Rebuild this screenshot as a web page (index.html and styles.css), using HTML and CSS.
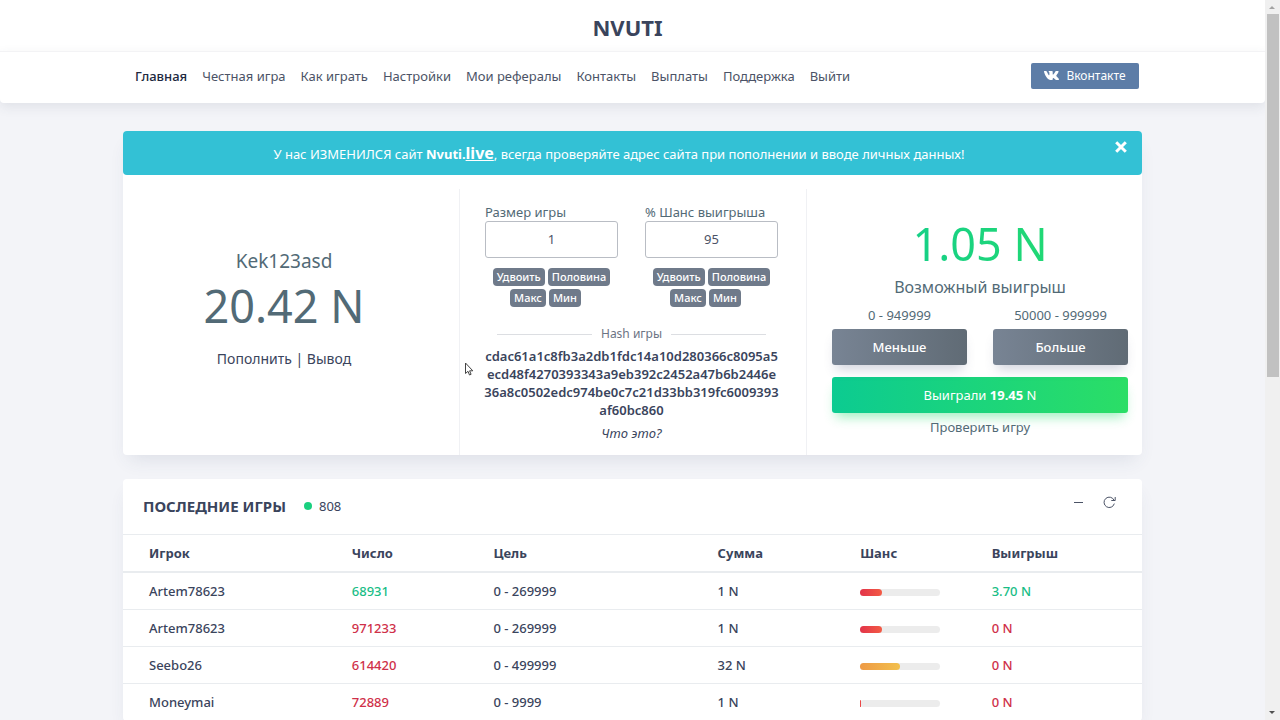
FILE: index.html
```html
<!DOCTYPE html>
<html lang="ru">
<head>
  <meta charset="UTF-8">
  <title>NVUTI</title>
  <link rel="stylesheet" href="styles.css">
</head>
<body>

  <div class="page">
    <!-- Header -->
    <header class="header">
      <div class="brand"><a href="#">NVUTI</a></div>
      <nav class="navbar">
        <div class="nav-inner">
          <div class="nav-links">
            <a href="#" class="active">Главная</a>
            <a href="#">Честная игра</a>
            <a href="#">Как играть</a>
            <a href="#">Настройки</a>
            <a href="#">Мои рефералы</a>
            <a href="#">Контакты</a>
            <a href="#">Выплаты</a>
            <a href="#">Поддержка</a>
            <a href="#">Выйти</a>
          </div>
          <a href="#" class="btn-vk">
            <svg width="15" height="9" viewBox="0 0 15 9" fill="#fff">
              <path d="M7.2 9h1c.4 0 .5-.3.5-.8 0-1.200.4-1.500 1.200-.9.800.6 1.200 1.700 2.500 1.700H14.500c.7-.2.500-.9.100-1.500-.5-.8-1.300-1.500-2.100-2.300-.3-.3-.3-.6 0-1C13.300 3.200 14.200 1.900 14.600.8c.1-.4-.1-.7-.6-.7h-2c-.4 0-.6.200-.8.600-.5 1.100-1.200 2.200-1.900 2.900-.4.300-.6 0-.6-.5V.8c0-.5-.2-.8-.7-.8H5c-.5 0-.6.300-.3.600.6.6.7 1 .7 1.800v1.400c0 .6-.4.6-.8.100C3.900 2.900 3.300 1.900 2.900.8 2.700.300 2.500.100 2 .100H.5C.1.100-.1.300 0 .800.500 2.800 1.600 5.200 3.100 7 4.300 8.400 5.700 9 7.200 9z"/>
            </svg>
            Вконтакте
          </a>
        </div>
      </nav>
    </header>

    <main class="container">
      <!-- Game -->
      <section class="card game">
        <div class="alert">
          <p>У нас ИЗМЕНИЛСЯ сайт <b>Nvuti.<u>live</u></b>, всегда проверяйте адрес сайта при пополнении и вводе личных данных!</p>
          <button type="button" class="alert-close" aria-label="Закрыть">
            <svg width="12" height="12" viewBox="0 0 12 12" stroke="#fff" stroke-width="3">
              <path d="M1.200 1.200 10.800 10.800M10.800 1.200 1.200 10.800"/>
            </svg>
          </button>
        </div>

        <div class="game-body">
          <div class="col account">
            <div class="username">Kek123asd</div>
            <div class="balance">20.42 N</div>
            <div class="account-links"><a href="#">Пополнить</a> | <a href="#">Вывод</a></div>
          </div>

          <div class="col bet">
            <div class="fields">
              <div class="field">
                <label for="betSize">Размер игры</label>
                <input type="text" id="betSize" value="1">
                <div class="tags">
                  <button type="button">Удвоить</button>
                  <button type="button">Половина</button>
                  <button type="button">Макс</button>
                  <button type="button">Мин</button>
                </div>
              </div>
              <div class="field">
                <label for="betPercent">% Шанс выигрыша</label>
                <input type="text" id="betPercent" value="95">
                <div class="tags">
                  <button type="button">Удвоить</button>
                  <button type="button">Половина</button>
                  <button type="button">Макс</button>
                  <button type="button">Мин</button>
                </div>
              </div>
            </div>
            <div class="divider">Hash игры</div>
            <div class="hash">cdac61a1c8fb3a2db1fdc14a10d280366c8095a5ecd48f4270393343a9eb392c2452a47b6b2446e36a8c0502edc974be0c7c21d33bb319fc6009393af60bc860</div>
            <a href="#" class="what">Что это?</a>
          </div>

          <div class="col play">
            <div class="profit">1.05 N</div>
            <div class="profit-label">Возможный выигрыш</div>
            <div class="choices">
              <div class="choice">
                <span>0 - 949999</span>
                <button type="button" class="btn btn-dark">Меньше</button>
              </div>
              <div class="choice">
                <span>50000 - 999999</span>
                <button type="button" class="btn btn-dark">Больше</button>
              </div>
            </div>
            <button type="button" class="btn btn-win">Выиграли <b>19.45</b> N</button>
            <a href="#" class="check">Проверить игру</a>
          </div>
        </div>
      </section>

      <!-- Last games -->
      <section class="card history">
        <div class="history-head">
          <h4>ПОСЛЕДНИЕ ИГРЫ</h4>
          <span class="dot"></span>
          <span class="online">808</span>
          <div class="tools">
            <button type="button" aria-label="Свернуть">
              <svg width="13" height="13" viewBox="0 0 13 13" fill="none" stroke="#4b5366">
                <path d="M2 6.500h9"/>
              </svg>
            </button>
            <button type="button" aria-label="Обновить">
              <svg width="13" height="13" viewBox="0 0 13 13" fill="none" stroke="#4b5366">
                <path d="M11 4.200A5.200 5.200 0 1 0 11.300 7.600M12.200 1v3.500H8.300"/>
              </svg>
            </button>
          </div>
        </div>
        <table>
          <thead>
            <tr>
              <th class="w-player">Игрок</th>
              <th class="w-number">Число</th>
              <th class="w-target">Цель</th>
              <th class="w-sum">Сумма</th>
              <th class="w-chance">Шанс</th>
              <th>Выигрыш</th>
            </tr>
          </thead>
          <tbody>
            <tr>
              <td>Artem78623</td>
              <td class="win">68931</td>
              <td>0 - 269999</td>
              <td>1 N</td>
              <td><div class="progress"><div class="bar bar-red" style="width: 27%"></div></div></td>
              <td class="win">3.70 N</td>
            </tr>
            <tr>
              <td>Artem78623</td>
              <td class="lose">971233</td>
              <td>0 - 269999</td>
              <td>1 N</td>
              <td><div class="progress"><div class="bar bar-red" style="width: 27%"></div></div></td>
              <td class="lose">0 N</td>
            </tr>
            <tr>
              <td>Seebo26</td>
              <td class="lose">614420</td>
              <td>0 - 499999</td>
              <td>32 N</td>
              <td><div class="progress"><div class="bar bar-orange" style="width: 50%"></div></div></td>
              <td class="lose">0 N</td>
            </tr>
            <tr>
              <td>Moneymai</td>
              <td class="lose">72889</td>
              <td>0 - 9999</td>
              <td>1 N</td>
              <td><div class="progress"><div class="bar bar-red" style="width: 1%"></div></div></td>
              <td class="lose">0 N</td>
            </tr>
          </tbody>
        </table>
      </section>
    </main>
  </div>

  <!-- Scrollbar -->
  <div class="scrollbar">
    <svg width="14" height="14" viewBox="0 0 14 14" fill="#a3a3a3"><path d="M4 9l3-3 3 3z"/></svg>
    <div class="scroll-thumb"></div>
    <svg class="scroll-down" width="14" height="14" viewBox="0 0 14 14" fill="#505050"><path d="M4 5l3 3 3-3z"/></svg>
  </div>

  <!-- Mouse pointer -->
  <svg class="cursor" width="10" height="15" viewBox="0 0 10 15" fill="#fff" stroke="#444" stroke-width="1">
    <path d="M1.500 1v10.500l2.500-2.200 1.500 3.700 1.600-.7-1.500-3.500h3.200z"/>
  </svg>

</body>
</html>
```
FILE: styles.css
```css
* {
  box-sizing: border-box;
}
body {
  margin: 0;
  display: flex;
  height: 100vh;
  overflow: hidden;
  background: #f3f4f8;
  font-family: "Noto Sans", "Open Sans", sans-serif;
  font-size: 13px;
  line-height: 18px;
  color: #3a445c;
}
a {
  color: inherit;
  text-decoration: none;
}
button, input {
  font-family: inherit;
  font-size: 13px;
}
button {
  border: none;
  padding: 0;
  background: none;
  cursor: pointer;
}
.page {
  flex: 1;
  overflow: hidden;
}

/* header */
.brand {
  height: 51px;
  padding: 11px 10px 0 0;
  background: #fff;
  text-align: center;
  font-size: 22px;
  font-weight: bold;
  line-height: 32px;
}
.navbar {
  background: #fff;
  border-top: 1px solid #f3f3f5;
  border-radius: 0 0 4px 4px;
  box-shadow: 0 4px 12px rgba(60,70,90,0.1);
}
.nav-inner {
  max-width: 1019px;
  height: 51px;
  margin: 0 auto;
  padding: 0 3px 4px 12px;
  display: flex;
  align-items: center;
  justify-content: space-between;
}
.nav-links {
  display: flex;
  gap: 15px;
  color: #4b5366;
}
.nav-links .active {
  color: #202840;
  font-weight: 500;
}
.btn-vk {
  display: flex;
  align-items: center;
  justify-content: center;
  gap: 7px;
  width: 108px;
  height: 26px;
  border-radius: 2px;
  background: #5d7da7;
  color: #fff;
  font-size: 12px;
}

/* cards */
.container {
  max-width: 1019px;
  margin: 28px auto 0;
}
.card {
  background: #fff;
  border-radius: 4px;
  box-shadow: 0 10px 18px -6px rgba(60,75,110,0.12);
  margin-bottom: 24px;
}
.alert {
  display: flex;
  align-items: center;
  min-height: 44px;
  padding: 0 15px;
  background: #33c1d5;
  border-radius: 4px;
  color: #fff;
}
.alert p {
  flex: 1;
  margin: 0;
  padding-right: 15px;
  text-align: center;
}
.alert u {
  font-size: 16px;
}
.alert-close {
  align-self: flex-start;
  height: 32px;
}
.alert-close svg {
  display: block;
}

/* game */
.game-body {
  display: grid;
  grid-template-columns: 336fr 347fr 336fr;
  padding-top: 14px;
}
.col {
  min-height: 266px;
  text-align: center;
  color: #526a76;
}
.col + .col {
  border-left: 1px solid #f0f1f4;
}
.account {
  display: flex;
  flex-direction: column;
  justify-content: center;
  padding: 0 14px 28px 0;
}
.username {
  font-size: 19px;
  line-height: 26px;
}
.balance {
  font-size: 45px;
  line-height: 64px;
}
.account-links {
  margin-top: 12px;
  color: #3a445c;
  font-size: 14px;
}
.bet {
  padding: 14px 28px 0 25px;
}
.fields {
  display: grid;
  grid-template-columns: 1fr 1fr;
  gap: 27px;
}
.field label {
  display: block;
  text-align: left;
}
.field input {
  display: block;
  width: 100%;
  height: 37px;
  padding: 0 2px 2px;
  border: 1px solid #b9bdc4;
  border-radius: 3px;
  background: #fff;
  color: #4b5366;
  text-align: center;
}
.tags {
  display: flex;
  flex-wrap: wrap;
  justify-content: center;
  gap: 3px;
  padding-top: 10px;
}
.tags button {
  height: 18px;
  padding: 0 4px 1px;
  border-radius: 4px;
  background: #6f7a8a;
  color: #fff;
  font-size: 11px;
  font-weight: 500;
}
.tags button:last-child {
  margin-right: 12px;
}
.divider {
  display: flex;
  align-items: center;
  gap: 9px;
  margin: 18px 12px 4px;
  font-size: 12px;
  color: #6c7484;
}
.divider::before,
.divider::after {
  content: "";
  flex: 1;
  border-top: 1px solid #dcdee2;
}
.hash {
  margin: 0 -1px;
  color: #3a445c;
  font-weight: 600;
  word-break: break-all;
}
.what {
  display: block;
  margin-top: 5px;
  color: #3a445c;
  font-style: italic;
}
.play {
  padding: 23px 14px 0 25px;
}
.profit {
  font-size: 45px;
  line-height: 64px;
  color: transparent;
  background: linear-gradient(90deg, #0fcb91, #28dd6a);
  -webkit-background-clip: text;
  background-clip: text;
}
.profit-label {
  font-size: 16px;
  line-height: 22px;
}
.choices {
  display: grid;
  grid-template-columns: 1fr 1fr;
  gap: 26px;
  margin: 8px 0 12px;
}
.choice span {
  display: block;
  margin-bottom: 5px;
}
.btn {
  display: block;
  width: 100%;
  height: 36px;
  border-radius: 3px;
  color: #fff;
}
.btn-dark {
  background: linear-gradient(90deg, #788494, #606b75);
  box-shadow: 0 8px 12px -4px rgba(70,80,120,0.25);
  font-weight: 500;
}
.btn-win {
  background: linear-gradient(90deg, #0ccb91, #2bde66);
  box-shadow: 0 8px 12px -4px rgba(40,220,110,0.45);
}
.check {
  display: block;
  margin-top: 5px;
}

/* last games */
.history-head {
  display: flex;
  align-items: center;
  height: 55px;
  padding: 0 26px 1px 20px;
}
.history-head h4 {
  margin: 0;
  font-size: 15px;
  font-weight: bold;
}
.dot {
  width: 8px;
  height: 8px;
  margin: 0 7px 0 18px;
  border-radius: 50%;
  background: #1ad07f;
}
.tools {
  display: flex;
  gap: 18px;
  margin-left: auto;
  padding-bottom: 8px;
}
.tools svg {
  display: block;
}
table {
  width: 100%;
  table-layout: fixed;
  border-collapse: separate;
  border-spacing: 0;
}
th, td {
  height: 37px;
  padding: 0 0 0 26px;
  border-bottom: 1px solid #e9ecef;
  text-align: left;
  font-weight: 500;
}
th {
  height: 39px;
  border-top: 1px solid #e9ecef;
  border-bottom-width: 2px;
  font-weight: bold;
}
.w-player {
  width: 19.9%;
}
.w-number {
  width: 13.9%;
}
.w-target {
  width: 22%;
}
.w-sum {
  width: 14%;
}
.w-chance {
  width: 12.9%;
}
.win {
  color: #18bd86;
}
.lose {
  color: #cf3049;
}
.progress {
  width: 80px;
  height: 7px;
  margin-top: 3px;
  border-radius: 4px;
  background: #ececec;
}
.bar {
  height: 7px;
  border-radius: 4px;
}
.bar-red {
  background: linear-gradient(90deg, #e23349, #f35b45);
}
.bar-orange {
  background: linear-gradient(90deg, #ee9a45, #f2c04d);
}

/* scrollbar */
.scrollbar {
  display: flex;
  flex-direction: column;
  width: 15px;
  background: #f0f0f0;
}
.scroll-thumb {
  height: 363px;
  margin: 0 1px 0 2px;
  background: #c1c1c1;
}
.scroll-down {
  margin-top: auto;
}
.cursor {
  position: absolute;
  left: 464px;
  top: 362px;
}
```
